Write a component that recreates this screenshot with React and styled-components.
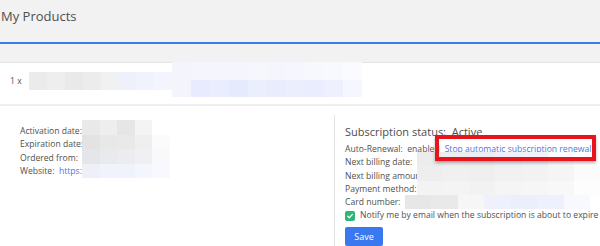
import React from "react";
import styled, { createGlobalStyle } from "styled-components";

const GlobalStyle = createGlobalStyle`
  html, body {
    margin: 0;
    padding: 0;
    background: #ffffff;
  }
  body {
    font-family: "Open Sans", "Liberation Sans", sans-serif;
    color: #555555;
  }
`;

const Page = styled.div`
  position: relative;
  width: 600px;
  height: 246px;
  overflow: hidden;
  background: #ffffff;
`;

const Header = styled.div`
  background: #f2f2f2;
  padding-bottom: 18px;
`;

const TitleBar = styled.div`
  height: 44px;
  border-bottom: 2px solid #3b7de6;
  box-sizing: border-box;
  padding: 6px 0 0 1px;
  font-size: 13px;
  line-height: 20px;
  color: #4f4f4f;
`;

const ProductRow = styled.div`
  display: flex;
  align-items: flex-start;
  height: 41px;
  border-top: 1px solid #e4e4e4;
  border-bottom: 2px solid #efefef;
  background: #fff;
  padding-left: 10px;
`;

const Qty = styled.span`
  font-size: 8.6px;
  line-height: 13px;
  margin-top: 12px;
  width: 19px;
  flex-shrink: 0;
`;

const Mosaic = styled.div`
  display: grid;
  grid-template-columns: repeat(${(p) => p.$cols}, 1fr);
  width: ${(p) => p.$w}px;
  height: ${(p) => p.$h}px;
  margin-top: ${(p) => p.$mt || 0}px;
  flex-shrink: 0;
`;

const Overlay = styled(Mosaic)`
  position: absolute;
  left: ${(p) => p.$x}px;
  top: ${(p) => p.$y}px;
  margin: 0;
`;

const Cell = styled.div`
  background: ${(p) => p.$c};
`;

const Details = styled.div`
  display: flex;
  padding-top: 9px;
`;

const LeftCol = styled.div`
  width: 334px;
  flex-shrink: 0;
  padding: 10px 0 0 20px;
  box-sizing: border-box;
`;

const RightCol = styled.div`
  flex: 1;
  border-left: 1px solid #e3e3e3;
  padding: 9px 0 4px 10px;
  min-height: 130px;
  white-space: nowrap;
`;

const Line = styled.div`
  font-size: 8.6px;
  line-height: 13.3px;
  white-space: nowrap;
  color: #505050;
`;

const Link = styled.a`
  color: #4e78e0;
  text-decoration: none;
`;

const StatusTitle = styled.div`
  font-size: 11px;
  line-height: 15px;
  color: #4d4d4d;
  margin-bottom: 4px;
`;

const Boxed = styled.span`
  position: relative;
  margin-left: 5px;
  &::after {
    content: "";
    position: absolute;
    z-index: 3;
    left: -10px;
    top: -8px;
    width: 161px;
    height: 26px;
    box-sizing: border-box;
    border: 4px solid #e8131b;
    box-shadow: 0 2px 3px rgba(0, 0, 0, 0.3);
  }
`;

const CheckRow = styled.label`
  display: flex;
  align-items: center;
  gap: 5px;
  font-size: 8.6px;
  line-height: 13.3px;
  white-space: nowrap;
  color: #505050;
`;

const CheckBox = styled.span`
  width: 10px;
  height: 10px;
  border-radius: 2px;
  background: #2db677;
  display: flex;
  align-items: center;
  justify-content: center;
  flex-shrink: 0;
`;

const SaveButton = styled.button`
  margin-top: 4px;
  width: 38px;
  height: 19px;
  border: none;
  border-radius: 2px;
  background: #3a78f0;
  color: #fff;
  font-family: "Open Sans", "Liberation Sans", sans-serif;
  font-size: 9px;
  padding: 0;
`;

const renderCells = (rows) =>
  rows.flat().map((c, i) => <Cell key={i} $c={c} />);

const productA = [
  ["#ebebeb", "#eeeeee", "#e9e9e9", "#ececec", "#f1f1f1", "#eef0fb", "#f0f2fc", "#f3f4fd"],
];
const productB = [
  ["#f3f4fc", "#f5f6fd", "#f5f6fd", "#f4f5fd", "#f6f7fd", "#f5f6fd", "#f6f7fe", "#f7f8fe", "#f8f9fe", "#fbfbff"],
  ["#f4f5fc", "#e7ebfd", "#e9edfd", "#e6eafd", "#eaeefd", "#e8ecfd", "#ebeffd", "#e9edfd", "#eef1fd", "#f6f7fe"],
];
const leftBlur = [
  ["#e9e9e9", "#eeeeee", "#e6e6e6", "#f4f4f4", "#ffffff"],
  ["#e3e3e3", "#e8e8e8", "#e9e9e9", "#efefef", "#fbfbfb"],
  ["#e5e6ea", "#e9eaee", "#ececf0", "#f0f0f2", "#f9f9fb"],
  ["#eef0f8", "#f1f3fc", "#f1f3fc", "#f4f6fd", "#f8f9fe"],
];
const rightBlur = [
  ["#ececec", "#eeeeee", "#ededf2", "#eef0fb", "#f0f2fc", "#fafafa", "#ffffff"],
  ["#eeeeee", "#f0f0f0", "#efefef", "#f1f1f1", "#f2f2f2", "#f5f5f5", "#fbfbfb"],
  ["#f3f3f3", "#f4f4f4", "#f2f2f2", "#f5f5f5", "#f6f6f6", "#f8f8f8", "#fdfdfd"],
];
const cardBlur = [
  ["#e7e7e7", "#e9e9e9", "#f6f6f6", "#eef0fb", "#eceffb", "#eef0fc", "#f8f9fe"],
];

export default function App() {
  return (
    <>
      <GlobalStyle />
      <Page>
        <Header>
          <TitleBar>My Products</TitleBar>
        </Header>
        <ProductRow>
          <Qty>1 x</Qty>
          <Mosaic $cols={8} $w={143} $h={18} $mt={9}>
            {renderCells(productA)}
          </Mosaic>
          <Mosaic $cols={10} $w={190} $h={35} $mt={-1}>
            {renderCells(productB)}
          </Mosaic>
        </ProductRow>
        <Details>
          <LeftCol>
            <Line>Activation date:</Line>
            <Line>Expiration date:</Line>
            <Line>Ordered from:</Line>
            <Line>
              Website:&nbsp; <Link>https://</Link>
            </Line>
          </LeftCol>
          <RightCol>
            <StatusTitle>Subscription status:&nbsp; Active</StatusTitle>
            <Line>
              Auto-Renewal:&nbsp; enabled
              <Boxed>
                <Link>Stop automatic subscription renewal</Link>
              </Boxed>
            </Line>
            <Line>Next billing date:</Line>
            <Line>Next billing amount:</Line>
            <Line>Payment method:</Line>
            <Line>Card number:</Line>
            <CheckRow>
              <CheckBox>
                <svg width="8" height="8" viewBox="0 0 10 10">
                  <path
                    d="M2 5.2 L4.1 7.2 L8 3"
                    fill="none"
                    stroke="#fff"
                    strokeWidth="1.6"
                    strokeLinecap="round"
                    strokeLinejoin="round"
                  />
                </svg>
              </CheckBox>
              Notify me by email when the subscription is about to expire
            </CheckRow>
            <SaveButton>Save</SaveButton>
          </RightCol>
        </Details>
        <Overlay $cols={5} $w={88} $h={58} $x={82} $y={120}>
          {renderCells(leftBlur)}
        </Overlay>
        <Overlay $cols={7} $w={183} $h={43} $x={417} $y={152}>
          {renderCells(rightBlur)}
        </Overlay>
        <Overlay $cols={7} $w={185} $h={14} $x={405} $y={195}>
          {renderCells(cardBlur)}
        </Overlay>
      </Page>
    </>
  );
}
